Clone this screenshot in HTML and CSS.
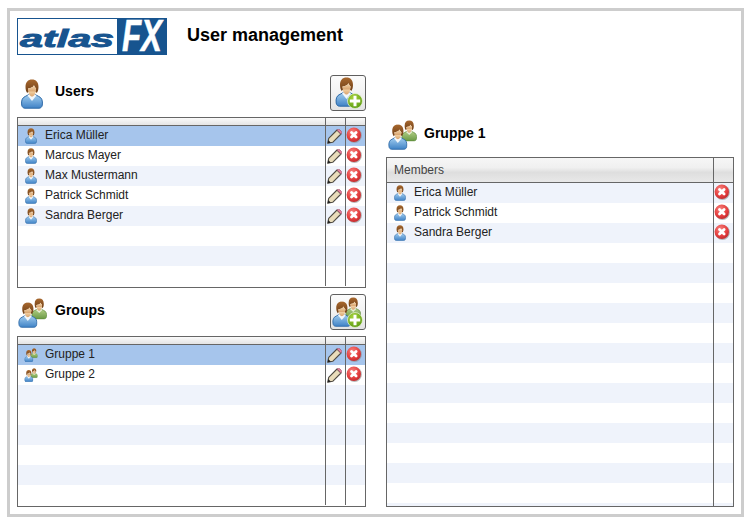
FILE: index.html
```html
<!DOCTYPE html>
<html lang="en">
<head>
<meta charset="utf-8">
<title>User management</title>
<link rel="stylesheet" href="styles.css">
</head>
<body>
<svg class="defs" width="0" height="0" aria-hidden="true">
  <defs>
    <linearGradient id="gBlue" x1="0" y1="0" x2="0" y2="1"><stop offset="0" stop-color="#a4cff0"/><stop offset="1" stop-color="#3f82c6"/></linearGradient>
    <linearGradient id="gGreen" x1="0" y1="0" x2="0" y2="1"><stop offset="0" stop-color="#b3cf86"/><stop offset="1" stop-color="#6b9a45"/></linearGradient>
    <linearGradient id="gHair" x1="0" y1="0" x2="0" y2="1"><stop offset="0" stop-color="#a8682e"/><stop offset="1" stop-color="#6e3f17"/></linearGradient>
    <linearGradient id="gSkin" x1="0" y1="0" x2="0" y2="1"><stop offset="0" stop-color="#f6d9ae"/><stop offset="1" stop-color="#d9a46f"/></linearGradient>
    <radialGradient id="gRed" cx=".4" cy=".3" r=".8"><stop offset="0" stop-color="#f6807c"/><stop offset=".6" stop-color="#e43f3f"/><stop offset="1" stop-color="#b92428"/></radialGradient>
    <radialGradient id="gPlus" cx=".4" cy=".3" r=".8"><stop offset="0" stop-color="#a8d43c"/><stop offset="1" stop-color="#569610"/></radialGradient>
    <symbol id="person" viewBox="0 0 22 30">
      <path d="M.7 26c-.6-4.500.6-7.500 3.800-8.700l3.500-1.800h6l3.500 1.800c3.200 1.200 4.400 4.200 3.800 8.700-.3 2-1.500 3.200-3.300 3.200H4c-1.800 0-3-1.200-3.300-3.200z" fill="url(#gBlue)" stroke="#2c68a6"/>
      <path d="M6.500 16.500l4.500 5.500 4.500-5.500-2-1.500h-5z" fill="#f2f6fa"/>
      <path d="M7 11.500c.5 3.500 2 6 4 6s3.500-2.500 4-6z" fill="url(#gSkin)"/>
      <path d="M4.500 8C4.500 3 7 .4 11 .4S17.500 3 17.500 8c0 2.500-.6 4.500-1.700 6l-1.300-1.500.6-3c-1-.8-1.600-1.700-2.100-3.200-1 2.200-3.500 3-6 3.200l.5 3-1.300 1.500C5.100 12.500 4.500 10.500 4.500 8z" fill="url(#gHair)"/>
      <path d="M7 9.500c2.500-.2 5-1 6-3.200.5 1.500 1.100 2.400 2.100 3.200-.1 1.300-.3 2.400-.6 3H7.500c-.3-.9-.5-2-.5-3z" fill="url(#gSkin)"/>
    </symbol>
    <symbol id="person-green" viewBox="0 0 22 30">
      <path d="M.7 26c-.6-4.500.6-7.500 3.800-8.700l3.500-1.800h6l3.500 1.800c3.200 1.200 4.400 4.200 3.800 8.700-.3 2-1.500 3.200-3.300 3.200H4c-1.800 0-3-1.200-3.300-3.200z" fill="url(#gGreen)" stroke="#5c8a3a"/>
      <path d="M6.500 16.500l4.500 4.500 4.500-4.500-2-1.500h-5z" fill="#e6efd8"/>
      <path d="M7 11.500c.5 3.500 2 6 4 6s3.500-2.500 4-6z" fill="url(#gSkin)"/>
      <path d="M4.500 8C4.500 3 7 .4 11 .4S17.500 3 17.500 8c0 2.500-.6 4.500-1.700 6l-1.300-1.500.6-3c-1-.8-1.600-1.700-2.100-3.200-1 2.200-3.500 3-6 3.200l.5 3-1.300 1.500C5.100 12.500 4.500 10.500 4.500 8z" fill="url(#gHair)"/>
      <path d="M7 9.500c2.500-.2 5-1 6-3.200.5 1.500 1.100 2.400 2.100 3.200-.1 1.300-.3 2.400-.6 3H7.500c-.3-.9-.5-2-.5-3z" fill="url(#gSkin)"/>
    </symbol>
    <symbol id="group" viewBox="0 0 28 29">
      <use href="#person-green" x="13" y="0" width="15" height="21"/>
      <use href="#person" x="0" y="4" width="19" height="25"/>
    </symbol>
    <symbol id="plus" viewBox="0 0 16 16">
      <circle cx="8" cy="8" r="7.500" fill="url(#gPlus)" stroke="#eef6dc" stroke-width=".7"/>
      <path d="M8 2.800v10.400M2.800 8h10.400" stroke="#fff" stroke-width="3"/>
    </symbol>
    <symbol id="pencil" viewBox="0 0 15 15">
      <path d="M.7 14.300l1-5L10 1l4 4-8.300 8.300z" fill="#e9dcba" stroke="#4e4a42" stroke-width="1.100" stroke-linejoin="round"/>
      <path d="M.7 14.300l.6-3.200 2.600 2.600z" fill="#222"/>
      <path d="M10 1c1-1 2-1 2.800-.2l1.400 1.400c.8.800.8 1.800-.2 2.800z" fill="#e2809a" stroke="#a25670" stroke-width=".7"/>
    </symbol>
    <symbol id="remove" viewBox="0 0 16 16">
      <circle cx="8.500" cy="8.500" r="7.400" fill="#8a8a8a" opacity=".6"/>
      <circle cx="7.800" cy="7.800" r="7.200" fill="url(#gRed)"/>
      <path d="M5.500 5.500l4.600 4.600M10.100 5.500l-4.600 4.600" stroke="#fff" stroke-width="2.800" stroke-linecap="round"/>
    </symbol>
  </defs>
</svg>

<div class="frame">
  <header class="top">
    <svg class="logo" viewBox="0 0 150 37" role="img" aria-label="atlasFX">
      <rect x=".5" y=".5" width="149" height="36" fill="#fff" stroke="#17548f"/>
      <rect x="100" y="0" width="50" height="37" fill="#17548f"/>
      <text class="logo-atlas" x="3" y="29" textLength="94" lengthAdjust="spacingAndGlyphs">atlas</text>
      <text class="logo-fx" x="105" y="33" textLength="40" lengthAdjust="spacingAndGlyphs">FX</text>
    </svg>
    <h1 class="title">User management</h1>
  </header>

  <main class="columns">
    <div class="col">
      <section class="panel">
        <div class="head">
          <svg class="head-icon head-icon-person"><use href="#person"/></svg>
          <h2 class="head-title">Users</h2>
          <button class="add" type="button" aria-label="Add user">
            <svg class="add-main"><use href="#person"/></svg>
            <svg class="add-plus"><use href="#plus"/></svg>
          </button>
        </div>
        <div class="grid grid-short">
          <div class="row row-head"><div></div><div class="cell"></div><div class="cell"></div></div>
          <div class="row selected"><div class="name"><span class="slot"><svg class="ic-person"><use href="#person"/></svg></span>Erica Müller</div><div class="cell"><svg class="ic-pencil"><use href="#pencil"/></svg></div><div class="cell"><svg class="ic-x"><use href="#remove"/></svg></div></div>
          <div class="row"><div class="name"><span class="slot"><svg class="ic-person"><use href="#person"/></svg></span>Marcus Mayer</div><div class="cell"><svg class="ic-pencil"><use href="#pencil"/></svg></div><div class="cell"><svg class="ic-x"><use href="#remove"/></svg></div></div>
          <div class="row tint"><div class="name"><span class="slot"><svg class="ic-person"><use href="#person"/></svg></span>Max Mustermann</div><div class="cell"><svg class="ic-pencil"><use href="#pencil"/></svg></div><div class="cell"><svg class="ic-x"><use href="#remove"/></svg></div></div>
          <div class="row"><div class="name"><span class="slot"><svg class="ic-person"><use href="#person"/></svg></span>Patrick Schmidt</div><div class="cell"><svg class="ic-pencil"><use href="#pencil"/></svg></div><div class="cell"><svg class="ic-x"><use href="#remove"/></svg></div></div>
          <div class="row tint"><div class="name"><span class="slot"><svg class="ic-person"><use href="#person"/></svg></span>Sandra Berger</div><div class="cell"><svg class="ic-pencil"><use href="#pencil"/></svg></div><div class="cell"><svg class="ic-x"><use href="#remove"/></svg></div></div>
          <div class="row"><div></div><div class="cell"></div><div class="cell"></div></div>
          <div class="row tint"><div></div><div class="cell"></div><div class="cell"></div></div>
          <div class="row"><div></div><div class="cell"></div><div class="cell"></div></div>
        </div>
      </section>

      <section class="panel">
        <div class="head">
          <svg class="head-icon head-icon-group"><use href="#group"/></svg>
          <h2 class="head-title">Groups</h2>
          <button class="add" type="button" aria-label="Add group">
            <svg class="add-main add-main-group"><use href="#group"/></svg>
            <svg class="add-plus"><use href="#plus"/></svg>
          </button>
        </div>
        <div class="grid grid-short">
          <div class="row row-head"><div></div><div class="cell"></div><div class="cell"></div></div>
          <div class="row selected"><div class="name"><span class="slot"><svg class="ic-group"><use href="#group"/></svg></span>Gruppe 1</div><div class="cell"><svg class="ic-pencil"><use href="#pencil"/></svg></div><div class="cell"><svg class="ic-x"><use href="#remove"/></svg></div></div>
          <div class="row"><div class="name"><span class="slot"><svg class="ic-group"><use href="#group"/></svg></span>Gruppe 2</div><div class="cell"><svg class="ic-pencil"><use href="#pencil"/></svg></div><div class="cell"><svg class="ic-x"><use href="#remove"/></svg></div></div>
          <div class="row tint"><div></div><div class="cell"></div><div class="cell"></div></div>
          <div class="row"><div></div><div class="cell"></div><div class="cell"></div></div>
          <div class="row tint"><div></div><div class="cell"></div><div class="cell"></div></div>
          <div class="row"><div></div><div class="cell"></div><div class="cell"></div></div>
          <div class="row tint"><div></div><div class="cell"></div><div class="cell"></div></div>
          <div class="row"><div></div><div class="cell"></div><div class="cell"></div></div>
        </div>
      </section>
    </div>

    <div class="col col-right">
      <div class="head head-right">
        <svg class="head-icon head-icon-group"><use href="#group"/></svg>
        <h2 class="head-title">Gruppe 1</h2>
      </div>
      <div class="grid grid-members">
        <div class="row row-members-head"><div class="name">Members</div><div class="cell"></div></div>
        <div class="row tint"><div class="name"><span class="slot"><svg class="ic-person"><use href="#person"/></svg></span>Erica Müller</div><div class="cell"><svg class="ic-x"><use href="#remove"/></svg></div></div>
        <div class="row"><div class="name"><span class="slot"><svg class="ic-person"><use href="#person"/></svg></span>Patrick Schmidt</div><div class="cell"><svg class="ic-x"><use href="#remove"/></svg></div></div>
        <div class="row tint"><div class="name"><span class="slot"><svg class="ic-person"><use href="#person"/></svg></span>Sandra Berger</div><div class="cell"><svg class="ic-x"><use href="#remove"/></svg></div></div>
        <div class="row"><div></div><div class="cell"></div></div>
        <div class="row tint"><div></div><div class="cell"></div></div>
        <div class="row"><div></div><div class="cell"></div></div>
        <div class="row tint"><div></div><div class="cell"></div></div>
        <div class="row"><div></div><div class="cell"></div></div>
        <div class="row tint"><div></div><div class="cell"></div></div>
        <div class="row"><div></div><div class="cell"></div></div>
        <div class="row tint"><div></div><div class="cell"></div></div>
        <div class="row"><div></div><div class="cell"></div></div>
        <div class="row tint"><div></div><div class="cell"></div></div>
        <div class="row"><div></div><div class="cell"></div></div>
        <div class="row tint"><div></div><div class="cell"></div></div>
        <div class="row"><div></div><div class="cell"></div></div>
        <div class="row tint"><div></div><div class="cell"></div></div>
      </div>
    </div>
  </main>
</div>
</body>
</html>
```

FILE: styles.css
```css
* { box-sizing: border-box; }

html, body { height: 100%; }

body {
  margin: 0;
  padding: 8px 6px 7px 7px;
  background: #fff;
  font-family: "Liberation Sans", Arial, sans-serif;
  font-size: 12px;
  color: #222;
  overflow: hidden;
}

.defs { position: absolute; }

.frame {
  width: 737px;
  height: 509px;
  border: 3px solid #cdcdcd;
  padding: 7px;
  display: flex;
  flex-direction: column;
  background: #fff;
}

.top {
  display: flex;
  align-items: center;
  gap: 20px;
  height: 37px;
  margin-bottom: 20px;
}

.logo { width: 150px; height: 37px; flex: none; display: block; overflow: visible; }

.logo-atlas {
  font: italic bold 24px "Liberation Sans", Arial, sans-serif;
  fill: #17548f;
  stroke: #17548f;
  stroke-width: .9px;
}

.logo-fx {
  font: italic bold 44px "Liberation Sans", Arial, sans-serif;
  fill: #fff;
  stroke: #fff;
  stroke-width: .6px;
}

.title {
  margin: 0 0 2px;
  font-size: 18px;
  font-weight: bold;
  color: #000;
}

.columns {
  flex: 1;
  min-height: 0;
  display: flex;
  gap: 20px;
}

.col {
  width: 349px;
  display: flex;
  flex-direction: column;
  gap: 6px;
}

.col-right {
  width: 348px;
  gap: 7px;
  padding-top: 45px;
}

.panel { display: flex; flex-direction: column; gap: 6px; }

.head {
  height: 36px;
  display: flex;
  align-items: center;
  position: relative;
}

.head-right { height: 30px; padding-left: 2px; }

.head-title {
  margin: 0 0 4px;
  font-size: 14px;
  font-weight: bold;
  color: #000;
}

.head-icon { flex: none; display: block; }

.head-icon-person { width: 22px; height: 30px; margin: 1px 12px 0 4px; }
.head-icon-group { width: 29px; height: 30px; margin-right: 7px; }
.panel .head-icon-group { margin: 2px 8px 0 1px; }

.add {
  margin-left: auto;
  position: relative;
  width: 36px;
  height: 36px;
  padding: 0;
  border: 1px solid #5f5f5f;
  border-radius: 3px;
  background: linear-gradient(#fbfbfb 0, #f3f3f3 45%, #e4e4e4 100%);
}

.add-main { position: absolute; left: 4px; top: 1px; width: 23px; height: 30px; }
.add-main-group { width: 29px; left: 1px; top: 2px; }
.add-plus { position: absolute; left: 16px; top: 17px; width: 16px; height: 16px; }

.grid {
  border: 1px solid #666;
  overflow: hidden;
  background: #fff;
}

.grid-short { height: 171px; }
.grid-members { height: 350px; }

.row {
  height: 20px;
  display: grid;
  grid-template-columns: 1fr 20px 20px;
}

.grid-members .row { grid-template-columns: 1fr 20px; }

.tint { background: #eff3fb; }
.selected { background: #a6c5ec; }

.row-head {
  height: 8px;
  background: linear-gradient(#fafafa, #e4e4e4);
  border-bottom: 1px solid #666;
}

.row-members-head {
  height: 25px;
  background: linear-gradient(#f6f6f6 0, #f0f0f0 40%, #dedede 60%, #e8e8e8 100%);
  border-bottom: 1px solid #666;
  color: #444;
}

.cell {
  border-left: 1px solid #666;
  position: relative;
}

.name {
  display: flex;
  align-items: center;
  padding: 0 0 2px 6px;
  white-space: nowrap;
}

.row-members-head .name { padding: 0 0 0 7px; }

.slot {
  width: 14px;
  margin-right: 7px;
  padding-top: 2px;
  display: flex;
  justify-content: center;
  flex: none;
}

.ic-person { width: 12px; height: 16px; display: block; }
.ic-group { width: 14px; height: 14px; display: block; }

.ic-pencil {
  position: absolute;
  left: 1px;
  top: 3px;
  width: 15px;
  height: 15px;
}

.ic-x {
  position: absolute;
  left: 0;
  top: 1px;
  width: 16px;
  height: 16px;
}
```
